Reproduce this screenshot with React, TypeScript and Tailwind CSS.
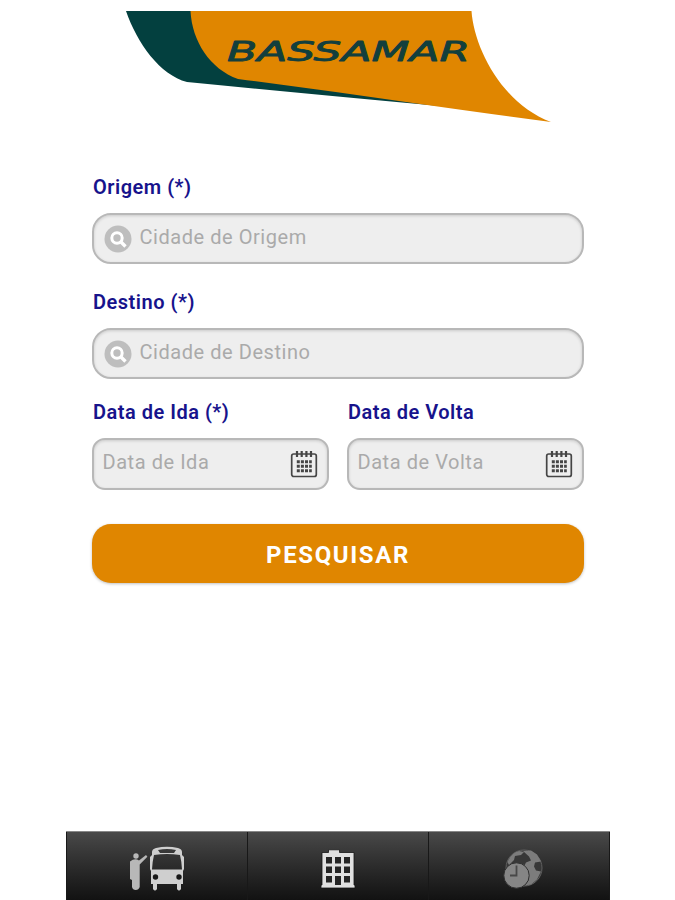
import { useState } from 'react'

function Logo() {
  return (
    <svg className="block h-[130px] w-[544px]" viewBox="66 0 544 130" role="img" aria-label="Bassamar">
      <path fill="#03403f" d="M126 11H260V80L420 100L440 106Q330 96 187 82C160 75 137 43 126 11Z" />
      <path fill="#e08600" d="M190.500 11H471.500C474 47 501 103 551 122Q490 114 420 104Q330 91 238 79C210 69 192 41 190.500 11Z" />
      <text
        x="227"
        y="60.500"
        textLength="243"
        lengthAdjust="spacingAndGlyphs"
        fill="#123f3d"
        stroke="#123f3d"
        strokeWidth=".8"
        strokeLinejoin="round"
        className="font-['DejaVu_Sans',sans-serif] text-[26px] font-normal italic"
      >
        BASSAMAR
      </text>
    </svg>
  )
}

function SearchIcon() {
  return (
    <svg className="h-7 w-7 shrink-0" viewBox="0 0 28 28" fill="none">
      <circle cx="14" cy="14" r="13.500" fill="#bebebe" />
      <circle cx="13" cy="13" r="5.200" stroke="#fff" strokeWidth="3" />
      <path d="M17 17L21.500 21.500" stroke="#fff" strokeWidth="3.400" />
    </svg>
  )
}

function CalendarIcon() {
  return (
    <svg className="h-7 w-7 shrink-0" viewBox="0 0 28 28" fill="none" stroke="#454545">
      <rect x="1.700" y="4" width="24.600" height="22.500" rx="2" strokeWidth="1.700" />
      <path d="M7 1v6M11.700 1v6M16.400 1v6M21 1v6" strokeWidth="2.200" />
      <path d="M6.800 11.700h15M6.800 16.200h15M6.800 20.700h15" strokeWidth="2.900" strokeDasharray="3 1.100" />
    </svg>
  )
}

function BusIcon() {
  return (
    <svg className="h-[46px] w-[58px]" viewBox="0 0 58 46">
      <g fill="#b8b8b8">
        <circle cx="8" cy="10" r="2.700" />
        <path d="M2 15.500q5-4 9-1l7-5.500 1.400 1.700-7.700 7.800V41q-1 3-4 3-3 0-3.700-3V34L2 33Z" />
      </g>
      <path
        fill="#cfcfcf"
        fillRule="evenodd"
        d="M24 6Q24 3 28 2 39-.5 50 2q4 1 4 4v3l2 2v12l-1 2v13h-2v5q-2 3-4 0v-5H29v5q-2 3-4 0v-5h-2V25l-1-2V11l2-2ZM30 4l2 3h14l2-3q-9-2-18 0ZM26 9q-1.500 6-2 14.500h30Q53.500 15 52 9q-13-2-26 0Z"
      />
      <circle cx="27.500" cy="31" r="2.700" fill="#181818" />
      <circle cx="51" cy="31" r="2.700" fill="#181818" />
    </svg>
  )
}

function BuildingIcon() {
  return (
    <svg className="h-10 w-9" viewBox="0 0 36 40">
      <path
        fill="#e0e0e0"
        stroke="#151515"
        strokeWidth=".8"
        d="M2 3.500H8.500V.8h11v2.700H34V36h1v3H1v-3h1Z"
      />
      <path
        fill="#252525"
        d="M6 8h6v6.500H6ZM15 8h6v6.500h-6ZM24 8h6v6.500h-6ZM6 17.500h6V24H6ZM15 17.500h6V24h-6ZM24 17.500h6V24h-6ZM6 27h6v6.500H6ZM15 27h6v9h-6ZM24 27h6v6.500h-6Z"
      />
    </svg>
  )
}

function GlobeClockIcon() {
  return (
    <svg className="ml-2 h-10 w-10" viewBox="0 0 40 40">
      <circle cx="21" cy="19" r="18" fill="#373737" stroke="#606060" strokeWidth="1" />
      <path
        fill="#7c7c7c"
        d="M4.500 13Q8 4 16 2l5 1-3 3-6 1-1 4-5 5ZM20 2l8-.5 6 4 4 7-6 1-1 4 2 4 5 1-4 8-6 5-6 1 4-6-1-7-4-6 2-4 5-2-2-4Z"
      />
      <circle cx="13.500" cy="26.500" r="12.700" fill="#858585" stroke="#303030" strokeWidth="1" />
      <path d="M13.500 16.500v10H7" fill="none" stroke="#484848" strokeWidth="1.800" />
    </svg>
  )
}

const labelClass = 'block h-6 pl-px text-[20px] leading-6 font-semibold tracking-[0.5px] text-[#17138c]'
const boxClass =
  'flex items-center border-2 border-[#b8b8b8] bg-[#eeeeee] shadow-[inset_0_1px_3px_rgba(0,0,0,0.15)]'
const inputClass =
  'min-w-0 flex-1 bg-transparent pb-1 text-[20px] tracking-[0.55px] text-[#555] outline-none placeholder:text-[#aaaaaa]'

type FieldProps = {
  label: string
  placeholder: string
  value: string
  onChange: (value: string) => void
}

function CityField({ label, placeholder, value, onChange }: FieldProps) {
  return (
    <label className="block">
      <span className={labelClass}>{label}</span>
      <div className={`${boxClass} mt-3.5 h-[51px] rounded-[19px] pr-3 pl-2.5`}>
        <SearchIcon />
        <input
          className={`${inputClass} ml-[7.5px]`}
          placeholder={placeholder}
          value={value}
          onChange={(e) => onChange(e.target.value)}
        />
      </div>
    </label>
  )
}

function DateField({ label, placeholder, value, onChange }: FieldProps) {
  return (
    <label className="block min-w-0 flex-1">
      <span className={labelClass}>{label}</span>
      <div className={`${boxClass} mt-3.5 h-[52px] rounded-[13px] pr-[9px] pl-[8.5px]`}>
        <input
          className={inputClass}
          placeholder={placeholder}
          value={value}
          onChange={(e) => onChange(e.target.value)}
        />
        <CalendarIcon />
      </div>
    </label>
  )
}

const tabs = [
  { id: 'bus', Icon: BusIcon },
  { id: 'building', Icon: BuildingIcon },
  { id: 'globe', Icon: GlobeClockIcon },
]

export default function App() {
  const [origin, setOrigin] = useState('')
  const [destination, setDestination] = useState('')
  const [departure, setDeparture] = useState('')
  const [comeback, setComeback] = useState('')

  return (
    <div className="h-[900px] w-[675px] overflow-hidden bg-white pl-[66px] font-['Roboto',sans-serif]">
      <main className="flex h-full w-[544px] flex-col">
        <Logo />
        <form className="mt-[45px] pr-[26px] pl-[26px]" onSubmit={(e) => e.preventDefault()}>
          <CityField label="Origem (*)" placeholder="Cidade de Origem" value={origin} onChange={setOrigin} />
          <div className="mt-[26px]">
            <CityField
              label="Destino (*)"
              placeholder="Cidade de Destino"
              value={destination}
              onChange={setDestination}
            />
          </div>
          <div className="mt-[21px] flex gap-[18px]">
            <DateField label="Data de Ida (*)" placeholder="Data de Ida" value={departure} onChange={setDeparture} />
            <DateField label="Data de Volta" placeholder="Data de Volta" value={comeback} onChange={setComeback} />
          </div>
          <button className="mt-[34px] h-[59px] w-full rounded-[19px] bg-[#e08600] pt-0.5 text-[24px] font-bold tracking-[1.6px] text-white shadow-[0_1px_3px_rgba(0,0,0,0.25)]">
            PESQUISAR
          </button>
        </form>
        <nav className="mt-auto flex h-[69px] border-t border-[#888] bg-linear-to-b from-[#494949] to-[#121212]">
          {tabs.map(({ id, Icon }) => (
            <button
              key={id}
              className="flex flex-1 items-center justify-center border-l border-[#181818] pt-1.5 last:border-r"
            >
              <Icon />
            </button>
          ))}
        </nav>
      </main>
    </div>
  )
}
